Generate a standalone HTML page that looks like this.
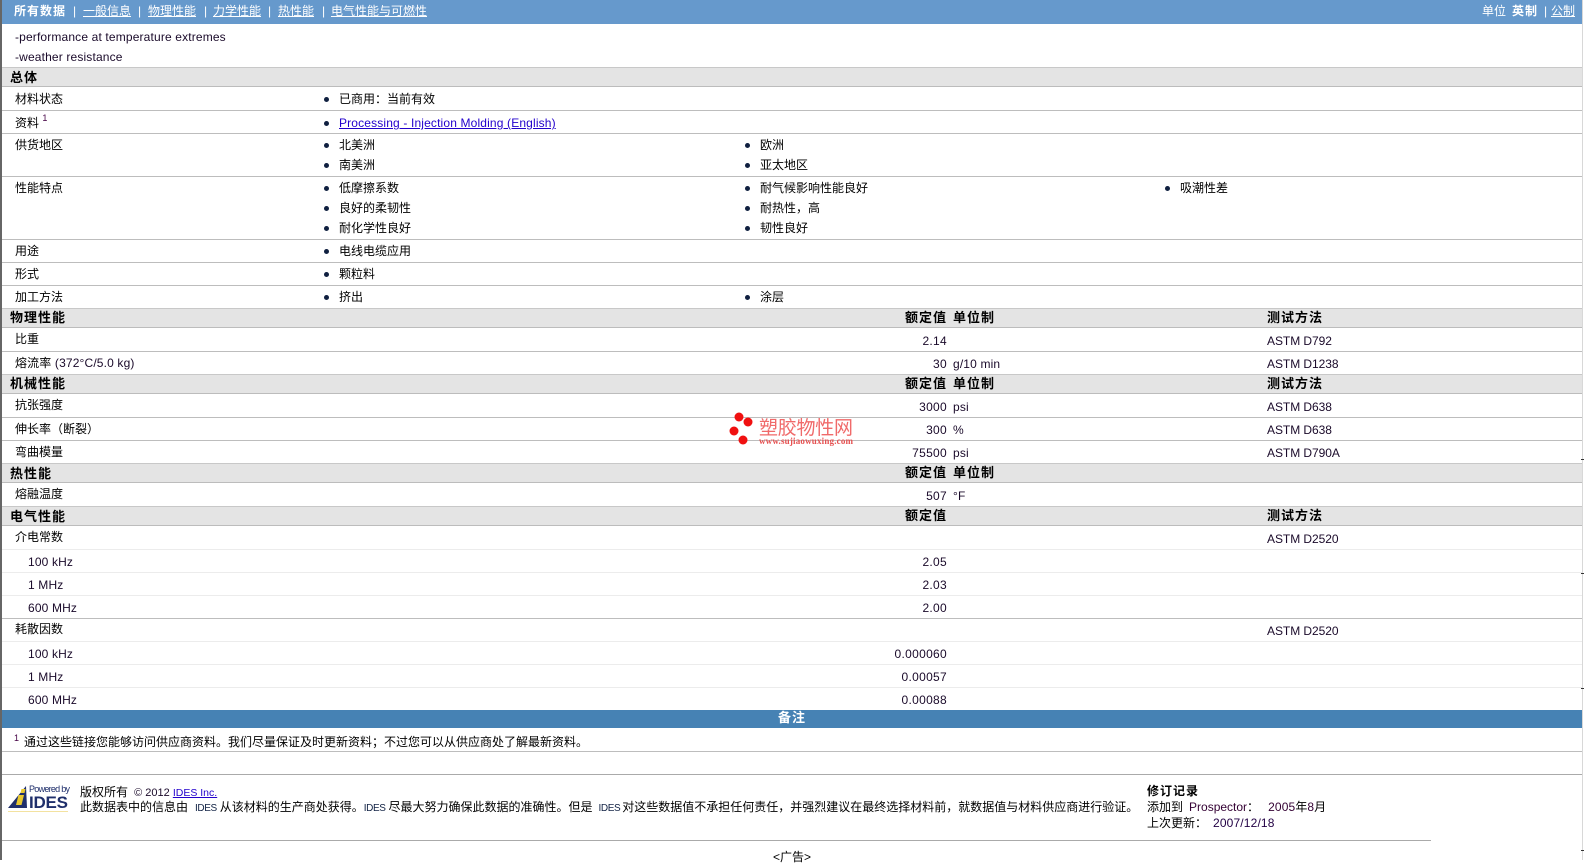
<!DOCTYPE html>
<html lang="zh">
<head>
<meta charset="utf-8">
<title>Datasheet</title>
<style>
html,body{margin:0;padding:0;background:#fff}
body{width:1584px;height:860px;overflow:hidden;position:relative;font:12px/14px "Liberation Sans","WenQuanYi Zen Hei","Noto Sans CJK SC",sans-serif;color:#1a0a2a}
.a,.t,.b,.r,.h,.l,.d{position:absolute;white-space:nowrap}
.t{height:14px}
.b{left:0}
.d{width:5px;height:5px;border-radius:50%;background:#102040}
.l{left:2px;width:1580px;height:1px;background:#bdbdbd}
.s{background:#ececec}
.h{left:2px;width:1580px;height:20px;background:#e4e4e4;border-top:1px solid #c8c8c8;border-bottom:1px solid #bcbcbc;box-sizing:border-box}
.k{font-weight:bold;font-size:13px;letter-spacing:1px;color:#000}
.r{text-align:right;width:100px;left:847px;letter-spacing:.3px}
.lat{letter-spacing:.15px}
.m{letter-spacing:-.05px}
.w{color:#fff}
.w u,a{text-decoration:underline}
a{color:#2200cc}
.c{color:#000}
.i{font-size:10px;color:#124;letter-spacing:-.4px}
</style>
</head>
<body>
<div class="a" style="left:0;top:0;width:2px;height:860px;background:#666"></div>
<div class="a" style="left:2px;top:0;width:1580px;height:24px;background:#6699cc"></div>
<div class="a" style="left:1582px;top:0;width:1px;height:860px;background:#d8d8d8"></div>

<div class="t w k" style="left:14px;top:4px;font-size:12px">所有数据</div>
<div class="t w" style="left:73px;top:4px">|</div><div class="t w" style="left:83px;top:4px"><u>一般信息</u></div>
<div class="t w" style="left:138px;top:4px">|</div><div class="t w" style="left:148px;top:4px"><u>物理性能</u></div>
<div class="t w" style="left:204px;top:4px">|</div><div class="t w" style="left:213px;top:4px"><u>力学性能</u></div>
<div class="t w" style="left:268px;top:4px">|</div><div class="t w" style="left:278px;top:4px"><u>热性能</u></div>
<div class="t w" style="left:322px;top:4px">|</div><div class="t w" style="left:331px;top:4px"><u>电气性能与可燃性</u></div>
<div class="t w" style="left:1482px;top:4px">单位</div>
<div class="t w k" style="left:1512px;top:4px;font-size:12px;letter-spacing:1px">英制</div>
<div class="t w" style="left:1544px;top:4px">|</div><div class="t w" style="left:1551px;top:4px"><u>公制</u></div>

<div class="t lat" style="left:15px;top:30px">-performance at temperature extremes</div>
<div class="t lat" style="left:15px;top:50px">-weather resistance</div>

<!-- section headers -->
<div class="h" style="top:67px"></div>
<div class="h" style="top:308px"></div>
<div class="h" style="top:374px"></div>
<div class="h" style="top:463px"></div>
<div class="h" style="top:506px"></div>

<!-- row lines -->
<div class="l" style="top:110px"></div>
<div class="l" style="top:133px"></div>
<div class="l" style="top:176px"></div>
<div class="l" style="top:239px"></div>
<div class="l" style="top:262px"></div>
<div class="l" style="top:285px"></div>
<div class="l" style="top:351px"></div>
<div class="l" style="top:417px"></div>
<div class="l" style="top:440px"></div>
<div class="l s" style="top:549px"></div>
<div class="l s" style="top:572px"></div>
<div class="l s" style="top:595px"></div>
<div class="l" style="top:618px"></div>
<div class="l s" style="top:641px"></div>
<div class="l s" style="top:664px"></div>
<div class="l s" style="top:687px"></div>
<div class="l" style="top:751px"></div>
<div class="l" style="top:774px;background:#aaa"></div>
<div class="l" style="top:840px;width:1429px;background:#aaa"></div>

<!-- General -->
<div class="t k" style="left:10px;top:71px">总体</div>
<div class="t c" style="left:15px;top:92px">材料状态</div>
<div class="d" style="left:324px;top:97px"></div><div class="t c" style="left:339px;top:92px">已商用：当前有效</div>
<div class="t c" style="left:15px;top:116px">资料 <sup style="font-size:9px;line-height:0;color:#404;position:relative;top:-1px">1</sup></div>
<div class="d" style="left:324px;top:121px"></div><div class="t lat" style="left:339px;top:116px"><a>Processing - Injection Molding (English)</a></div>
<div class="t c" style="left:15px;top:138px">供货地区</div>
<div class="d" style="left:324px;top:143px"></div><div class="t c" style="left:339px;top:138px">北美洲</div>
<div class="d" style="left:745px;top:143px"></div><div class="t c" style="left:760px;top:138px">欧洲</div>
<div class="d" style="left:324px;top:163px"></div><div class="t c" style="left:339px;top:158px">南美洲</div>
<div class="d" style="left:745px;top:163px"></div><div class="t c" style="left:760px;top:158px">亚太地区</div>
<div class="t c" style="left:15px;top:181px">性能特点</div>
<div class="d" style="left:324px;top:186px"></div><div class="t c" style="left:339px;top:181px">低摩擦系数</div>
<div class="d" style="left:745px;top:186px"></div><div class="t c" style="left:760px;top:181px">耐气候影响性能良好</div>
<div class="d" style="left:1165px;top:186px"></div><div class="t c" style="left:1180px;top:181px">吸潮性差</div>
<div class="d" style="left:324px;top:206px"></div><div class="t c" style="left:339px;top:201px">良好的柔韧性</div>
<div class="d" style="left:745px;top:206px"></div><div class="t c" style="left:760px;top:201px">耐热性，高</div>
<div class="d" style="left:324px;top:226px"></div><div class="t c" style="left:339px;top:221px">耐化学性良好</div>
<div class="d" style="left:745px;top:226px"></div><div class="t c" style="left:760px;top:221px">韧性良好</div>
<div class="t c" style="left:15px;top:244px">用途</div>
<div class="d" style="left:324px;top:249px"></div><div class="t c" style="left:339px;top:244px">电线电缆应用</div>
<div class="t c" style="left:15px;top:267px">形式</div>
<div class="d" style="left:324px;top:272px"></div><div class="t c" style="left:339px;top:267px">颗粒料</div>
<div class="t c" style="left:15px;top:290px">加工方法</div>
<div class="d" style="left:324px;top:295px"></div><div class="t c" style="left:339px;top:290px">挤出</div>
<div class="d" style="left:745px;top:295px"></div><div class="t c" style="left:760px;top:290px">涂层</div>

<!-- Physical -->
<div class="t k" style="left:10px;top:311px">物理性能</div>
<div class="t k" style="left:905px;top:311px">额定值</div><div class="t k" style="left:953px;top:311px">单位制</div><div class="t k" style="left:1267px;top:311px">测试方法</div>
<div class="t c" style="left:15px;top:332px">比重</div>
<div class="r" style="top:334px">2.14</div><div class="t m" style="left:1267px;top:334px">ASTM D792</div>
<div class="t lat" style="left:15px;top:356px"><span class="c">熔流率</span> (372°C/5.0 kg)</div>
<div class="r" style="top:357px">30</div><div class="t lat" style="left:953px;top:357px">g/10 min</div><div class="t m" style="left:1267px;top:357px">ASTM D1238</div>

<!-- Mechanical -->
<div class="t k" style="left:10px;top:377px">机械性能</div>
<div class="t k" style="left:905px;top:377px">额定值</div><div class="t k" style="left:953px;top:377px">单位制</div><div class="t k" style="left:1267px;top:377px">测试方法</div>
<div class="t c" style="left:15px;top:398px">抗张强度</div>
<div class="r" style="top:400px">3000</div><div class="t lat" style="left:953px;top:400px">psi</div><div class="t m" style="left:1267px;top:400px">ASTM D638</div>
<div class="t c" style="left:15px;top:422px">伸长率（断裂）</div>
<div class="r" style="top:423px">300</div><div class="t lat" style="left:953px;top:423px">%</div><div class="t m" style="left:1267px;top:423px">ASTM D638</div>
<div class="t c" style="left:15px;top:445px">弯曲模量</div>
<div class="r" style="top:446px">75500</div><div class="t lat" style="left:953px;top:446px">psi</div><div class="t m" style="left:1267px;top:446px">ASTM D790A</div>

<!-- Thermal -->
<div class="t k" style="left:10px;top:467px">热性能</div>
<div class="t k" style="left:905px;top:466px">额定值</div><div class="t k" style="left:953px;top:466px">单位制</div>
<div class="t c" style="left:15px;top:487px">熔融温度</div>
<div class="r" style="top:489px">507</div><div class="t lat" style="left:953px;top:489px">°F</div>

<!-- Electrical -->
<div class="t k" style="left:10px;top:510px">电气性能</div>
<div class="t k" style="left:905px;top:509px">额定值</div><div class="t k" style="left:1267px;top:509px">测试方法</div>
<div class="t c" style="left:15px;top:530px">介电常数</div><div class="t m" style="left:1267px;top:532px">ASTM D2520</div>
<div class="t lat" style="left:28px;top:555px">100 kHz</div><div class="r" style="top:555px">2.05</div>
<div class="t lat" style="left:28px;top:578px">1 MHz</div><div class="r" style="top:578px">2.03</div>
<div class="t lat" style="left:28px;top:601px">600 MHz</div><div class="r" style="top:601px">2.00</div>
<div class="t c" style="left:15px;top:622px">耗散因数</div><div class="t m" style="left:1267px;top:624px">ASTM D2520</div>
<div class="t lat" style="left:28px;top:647px">100 kHz</div><div class="r" style="top:647px">0.000060</div>
<div class="t lat" style="left:28px;top:670px">1 MHz</div><div class="r" style="top:670px">0.00057</div>
<div class="t lat" style="left:28px;top:693px">600 MHz</div><div class="r" style="top:693px">0.00088</div>

<!-- Notes -->
<div class="a" style="left:2px;top:710px;width:1580px;height:18px;background:#4682b4;color:#fff;text-align:center;font-weight:bold;font-size:13px;letter-spacing:1px;line-height:16px">备注</div>
<div class="t" style="left:14px;top:731px;font-size:9px;color:#404">1</div>
<div class="t c" style="left:24px;top:735px">通过这些链接您能够访问供应商资料。我们尽量保证及时更新资料；不过您可以从供应商处了解最新资料。</div>

<!-- Footer logo -->
<svg class="a" style="left:6px;top:784px" width="66" height="30" viewBox="0 0 66 30">
<path d="M2 24 L20 2 L21 24 Z" fill="#1f2f6b"/>
<path d="M12.5 11 L18 11 L15.5 21 L10 21 Z M15.5 5 L19.5 5 L18.5 9 L14.5 9 Z" fill="#e8c830"/>
<rect x="2" y="27" width="60" height="1" fill="#f3e2a0"/>
<text x="23" y="8" font-family="Liberation Sans, sans-serif" font-size="9" fill="#1f2f6b" textLength="41">Powered by</text>
<text x="23" y="24" font-family="Liberation Sans, sans-serif" font-size="17" font-weight="bold" fill="#1f2f6b" textLength="39">IDES</text>
</svg>
<div class="t" style="left:80px;top:785px"><span class="c">版权所有</span><span style="font-size:11px">&nbsp; © 2012 </span><a style="font-size:10.5px">IDES Inc.</a></div>
<div class="t c" style="left:80px;top:800px">此数据表中的信息由<span class="i" style="margin:0 3px 0 7px">IDES</span>从该材料的生产商处获得。<span class="i" style="margin-right:3px">IDES</span>尽最大努力确保此数据的准确性。但是<span class="i" style="margin:0 2px 0 6px">IDES</span>对这些数据值不承担任何责任，并强烈建议在最终选择材料前，就数据值与材料供应商进行验证。</div>
<div class="t k" style="left:1147px;top:784px;font-size:12px">修订记录</div>
<div class="t c" style="left:1147px;top:800px">添加到<span style="color:#303;margin-left:6px">Prospector</span>：<span class="lat" style="color:#303;margin-left:9px">2005</span>年<span style="color:#303">8</span>月</div>
<div class="t c" style="left:1147px;top:816px">上次更新：<span class="lat" style="color:#204;margin-left:6px">2007/12/18</span></div>
<div class="t c" style="left:773px;top:850px">&lt;广告&gt;</div>

<!-- Watermark -->
<svg class="a" style="left:725px;top:408px" width="140" height="42" viewBox="725 408 140 42">
<circle cx="739" cy="417" r="4.5" fill="#f01010"/>
<circle cx="748" cy="422" r="4.5" fill="#f01010"/>
<circle cx="734" cy="431" r="4.5" fill="#f01010"/>
<circle cx="743" cy="440" r="4.5" fill="#f01010"/>
<text x="759" y="434" font-family="WenQuanYi Zen Hei, Noto Sans CJK SC, sans-serif" font-size="19" fill="#f06a6a" textLength="94">塑胶物性网</text>
<text x="759" y="444" font-family="Liberation Serif, serif" font-size="9" font-weight="bold" fill="#e65050" textLength="94">www.sujiaowuxing.com</text>
</svg>

<!-- Right edge ticks -->
<div class="a" style="left:1581px;top:459px;width:3px;height:1px;background:#333"></div>
<div class="a" style="left:1581px;top:573px;width:3px;height:1px;background:#333"></div>
<div class="a" style="left:1581px;top:688px;width:3px;height:1px;background:#333"></div>
<div class="a" style="left:1581px;top:850px;width:3px;height:1px;background:#333"></div>
</body>
</html>
